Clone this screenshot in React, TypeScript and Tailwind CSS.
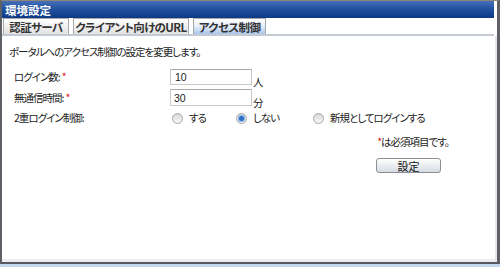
import React from "react";

const jp = { fontFamily: '"Noto Sans CJK JP", "Noto Sans", sans-serif', fontFeatureSettings: '"palt"' } as React.CSSProperties;

function Radio({ checked, label }: { checked?: boolean; label: string }) {
  return (
    <label className="flex items-center gap-[6px]">
      <span className="w-[11px] h-[11px] rounded-full border border-[#a8a8a8] bg-gradient-to-b from-[#d8d8d8] to-[#f8f8f8] flex items-center justify-center">
        {checked && <span className="w-[5px] h-[5px] rounded-full bg-[#2f6fc0] shadow-[0_0_1px_1px_#7fb0e8]" />}
      </span>
      <span>{label}</span>
    </label>
  );
}

export default function App() {
  return (
    <div className="w-[500px] h-[267px] bg-[#c3d7ee] text-[#222] text-[10.5px] leading-[12px] tracking-[-1px]" style={jp}>
      <div className="h-[264px] border-t border-t-[#8c8478] border-l-2 border-l-[#5e6066] border-r-[3px] border-r-[#5e6066] border-b-2 border-b-[#55585e] bg-white flex flex-col">
        <div className="h-[17px] bg-gradient-to-b from-[#4570b8] via-[#1f4f9e] to-[#0c3a85] text-white font-bold text-[11.5px] tracking-normal flex items-center pl-[3px] mr-[3px]">
          環境設定
        </div>
        <div className="flex items-end h-[18px] border-b-2 border-b-[#c4cad4] mr-[3px] pl-[1px] gap-[4px] font-bold text-[#333] text-[11.5px] tracking-[-0.6px]">
          <div className="w-[66px] h-[16px] border border-[#a9a9a9] border-b-0 bg-gradient-to-b from-white to-[#e2e2e2] flex items-center justify-center">認証サーバ</div>
          <div className="w-[116px] h-[16px] border border-[#a9a9a9] border-b-0 bg-gradient-to-b from-white to-[#e2e2e2] flex items-center justify-center">クライアント向けのURL</div>
          <div className="w-[73px] h-[16px] border border-[#a9a9a9] border-b-0 bg-gradient-to-b from-white via-[#e4edf9] to-[#a9c6ec] flex items-center justify-center">アクセス制御</div>
        </div>
        <div className="flex-1 border-r-2 border-r-[#e6e6e6] border-b-[3px] border-b-[#ececec] flex flex-col">
          <div className="mt-[10px] pl-[7px]">ポータルへのアクセス制御の設定を変更します。</div>
          <div className="mt-[11px] pl-[12px] grid grid-cols-[156px_1fr] items-center">
            <div className="h-[16px] flex items-center">ログイン数:<span className="text-[#e02020] ml-[2px]">*</span></div>
            <div className="flex items-end">
              <div className="w-[82px] h-[16px] border border-[#c8c8c8] border-t-[#a8a8a8] bg-white flex items-center pl-[4px] text-[10.5px] tracking-normal" style={{ fontFamily: '"Liberation Sans", Arial, sans-serif' }}>10</div>
              <span className="mb-[-3px] ml-[1px]">人</span>
            </div>
            <div className="h-[17px] mt-[4px] flex items-center">無通信時間:<span className="text-[#e02020] ml-[2px]">*</span></div>
            <div className="flex items-end mt-[4px]">
              <div className="w-[82px] h-[17px] border border-[#c8c8c8] border-t-[#a8a8a8] bg-white flex items-center pl-[3px] text-[10.5px] tracking-normal" style={{ fontFamily: '"Liberation Sans", Arial, sans-serif' }}>30</div>
              <span className="mb-[-3px] ml-[1px]">分</span>
            </div>
            <div className="mt-[6px] h-[12px] flex items-center">2重ログイン制御:</div>
            <div className="mt-[6px] h-[12px] flex items-center pl-[2px]">
              <div className="w-[64px]"><Radio label="する" /></div>
              <div className="w-[77px]"><Radio checked label="しない" /></div>
              <Radio label="新規としてログインする" />
            </div>
          </div>
          <div className="mt-[12px] self-end mr-[46px]"><span className="text-[#e02020]">*</span>は必須項目です。</div>
          <button className="mt-[10px] self-end mr-[54px] w-[65px] h-[15px] rounded-[3px] border border-[#8a8f96] bg-gradient-to-b from-white to-[#d7dce3] flex items-center justify-center text-[#111] text-[11px] tracking-normal" style={jp}>設定</button>
        </div>
      </div>
    </div>
  );
}
